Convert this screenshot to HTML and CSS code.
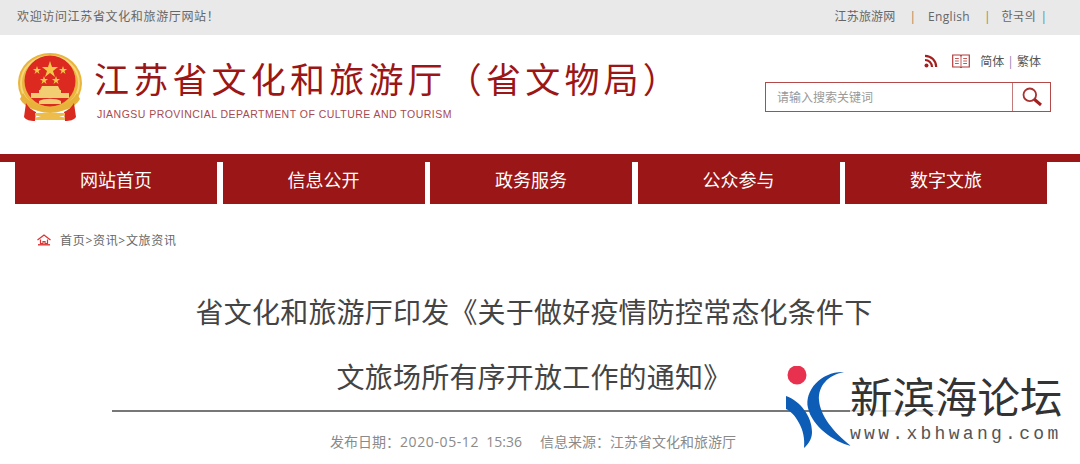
FILE: index.html
```html
<!DOCTYPE html>
<html lang="zh-CN">
<head>
<meta charset="utf-8">
<title>江苏省文化和旅游厅（省文物局）</title>
<link rel="stylesheet" href="styles.css">
</head>
<body>
<div class="topbar">
  <span class="welcome">欢迎访问江苏省文化和旅游厅网站！</span>
  <div class="toplinks">
    <a>江苏旅游网</a><i class="tsep">|</i><a class="en">English</a><i class="tsep">|</i><a class="ko">한국의</a><i class="tend">|</i>
  </div>
</div>
<header class="header">
  <div class="brand">
    <svg class="emblem" viewBox="0 0 66 70" width="66" height="70">
      <ellipse cx="33" cy="30" rx="32" ry="30" fill="#e9b53c"/>
      <ellipse cx="33" cy="30" rx="29" ry="27" fill="none" stroke="#f6d67a" stroke-width="2"/>
      <circle cx="33" cy="28" r="25.500" fill="#dc2a20"/>
      <polygon points="33,8 35,14 41,14 36,18 38,24 33,20 28,24 30,18 25,14 31,14" fill="#f4c64a"/>
      <polygon points="20,13 21,16 24,16 21.500,18 22.500,21 20,19 17.500,21 18.500,18 16,16 19,16" fill="#f4c64a"/>
      <polygon points="46,13 47,16 50,16 47.500,18 48.500,21 46,19 43.500,21 44.500,18 42,16 45,16" fill="#f4c64a"/>
      <polygon points="27,23 28,26 31,26 28.500,28 29.500,31 27,29 24.500,31 25.500,28 23,26 26,26" fill="#f4c64a"/>
      <polygon points="39,23 40,26 43,26 40.500,28 41.500,31 39,29 36.500,31 37.500,28 35,26 38,26" fill="#f4c64a"/>
      <path d="M25 33h16l2 4H23zM22 37h22v3H22zM14 40h38v5H14z" fill="#f2cd72"/>
      <path d="M6 40c6 10 16 14 27 14s21-4 27-14l3 6c-5 9-17 13-30 13S8 55 3 46z" fill="#e8b23a"/>
      <path d="M9 50c3 5 6 7 10 9l-1 9c-5 0-9-1-11-4zM57 50c-3 5-6 7-10 9l1 9c5 0 9-1 11-4z" fill="#d92a1f"/>
      <path d="M18 60h30v2.500l-6 1 6 1V67H18v-2.500l6-1-6-1z" fill="#eebc4a"/>
      <path d="M22 48c5-3 17-3 22 0v3H22z" fill="#f2cd72"/>
    </svg>
    <div class="brand-text">
      <h1 class="site-title">江苏省文化和旅游厅（省文物局）</h1>
      <p class="site-en">JIANGSU PROVINCIAL DEPARTMENT OF CULTURE AND TOURISM</p>
    </div>
  </div>
  <div class="tools">
    <div class="tool-row">
      <svg class="ico-rss" viewBox="0 0 14 14" width="14" height="14">
        <circle cx="2.500" cy="11.500" r="2" fill="#a32020"/>
        <path d="M1 6a7 7 0 0 1 7 7M1 1.800A11.200 11.200 0 0 1 12.200 13" fill="none" stroke="#a32020" stroke-width="2.200"/>
      </svg>
      <svg class="ico-book" viewBox="0 0 18 14" width="18" height="14">
        <path d="M.7 1h7.600l.7 1 .7-1h7.600v12H10l-1 .6-1-.6H.7z" fill="none" stroke="#b23a3a" stroke-width="1.200"/>
        <path d="M9 2v11M3 4.500h3.800M3 7h3.800M3 9.500h3.800M11.200 4.500H15M11.200 7H15M11.200 9.500H15" stroke="#c25a5a" stroke-width="1"/>
      </svg>
      <span class="lang">简体 <b>|</b> 繁体</span>
    </div>
    <div class="search">
      <span class="search-input">请输入搜索关键词</span>
      <span class="search-btn">
        <svg viewBox="0 0 22 22" width="22" height="22">
          <circle cx="8.800" cy="8.800" r="6.300" fill="none" stroke="#a83232" stroke-width="1.800"/>
          <path d="M13.500 13.500L20 19" stroke="#a32020" stroke-width="3"/>
        </svg>
      </span>
    </div>
  </div>
</header>
<nav class="nav">
  <a>网站首页</a><a>信息公开</a><a>政务服务</a><a>公众参与</a><a>数字文旅</a>
</nav>
<div class="crumbs">
  <svg class="ico-home" viewBox="0 0 14 12" width="14" height="12">
    <path d="M.5 6L7 1l6.500 5" fill="none" stroke="#d33" stroke-width="1.300"/>
    <path d="M3.500 5.500v4h2.500V7.500h2V9.500h2.500v-4" fill="none" stroke="#d33" stroke-width="1.200"/>
    <path d="M1 10.800h12" stroke="#d33" stroke-width="1.400"/>
  </svg>
  <span>首页&gt;资讯&gt;文旅资讯</span>
</div>
<main class="article">
  <h2 class="art-title">省文化和旅游厅印发《关于做好疫情防控常态化条件下<br>文旅场所有序开放工作的通知》</h2>
  <div class="art-rule"></div>
  <p class="art-meta"><span>发布日期：<span class="num">2020-05-12</span>&nbsp;&nbsp;15:36</span><span>信息来源：江苏省文化和旅游厅</span></p>
</main>
<div class="watermark">
  <svg class="wm-logo" viewBox="0 0 66 82" width="66" height="82">
    <circle cx="11" cy="9" r="9.500" fill="#e8304f"/>
    <path d="M0 30c14 5 26 20 26 36 0 5-2 11-8 16 1-9-1-18-5-25C9 49 4 45 0 43z" fill="#0d5cb6"/>
    <path d="M58 6C42 9 32 20 33 34c1 15 14 32 32 46C48 76 26 60 22 42 18 24 36 5 58 6z" fill="#0d5cb6"/>
  </svg>
  <div class="wm-text">
    <div class="wm-name">新滨海论坛</div>
    <div class="wm-url">www.xbhwang.com</div>
  </div>
</div>
</body>
</html>
```
FILE: styles.css
```css
* { box-sizing: border-box; }
html, body { margin: 0; padding: 0; }
body {
  position: relative;
  width: 1080px;
  height: 464px;
  overflow: hidden;
  background: #fff;
  font-family: "Open Sans", "Noto Sans CJK SC", sans-serif;
  color: #555;
}
.topbar {
  height: 35px;
  background: #e9e9e9;
  display: flex;
  justify-content: space-between;
  align-items: center;
  padding: 0 33px 3px 17px;
  font-size: 12px;
  color: #666;
}
.welcome { letter-spacing: .65px; }
.toplinks { display: flex; align-items: center; }
.toplinks a:first-child { letter-spacing: .2px; }
.toplinks .en { letter-spacing: .3px; margin-left: -2px; }
.toplinks .ko { letter-spacing: .6px; margin-left: -3px; }
.tsep { font-style: normal; color: #a8814f; margin: 0 14px; }
.tend { font-style: normal; color: #5d87a8; margin-left: 4px; }
.header {
  height: 119px;
  display: flex;
  justify-content: space-between;
  padding: 18px 29px 0 17px;
}
.brand { display: flex; align-items: flex-start; gap: 11px; }
.brand-text { padding-top: 0; }
.site-title {
  margin: 0;
  font-family: "Noto Sans CJK SC", sans-serif;
  font-size: 35px;
  font-weight: 400;
  line-height: 49px;
  letter-spacing: 4.200px;
  color: #9b1616;
  white-space: nowrap;
}
.site-en {
  margin: 5px 0 0 3px;
  font-family: "Liberation Sans", sans-serif;
  font-size: 10.500px;
  line-height: 14px;
  letter-spacing: .47px;
  color: #a84a4f;
}
.tools { width: 286px; display: flex; flex-direction: column; align-items: flex-end; }
.tool-row { display: flex; align-items: center; height: 18px; margin-right: 10px; margin-top: -1px; }
.ico-rss { margin-right: 14px; }
.ico-book { margin-right: 10px; }
.lang { font-size: 12px; color: #555; }
.lang b { font-weight: 400; color: #8c7fb0; }
.search {
  margin-top: 12px;
  width: 286px;
  height: 30px;
  border: 1px solid #b34a4a;
  display: flex;
  align-items: stretch;
}
.search-input { flex: 1; padding-left: 11px; font-size: 12px; line-height: 29px; color: #999; }
.search-btn {
  width: 38px;
  border-left: 1px solid #c47a7a;
  display: flex;
  align-items: center;
  justify-content: center;
}
.nav {
  height: 50px;
  border-top: 8px solid #9b1616;
  padding-left: 15px;
  display: flex;
  gap: 5.500px;
}
.nav a {
  width: 202px;
  height: 42px;
  background: #9b1616;
  color: #fff;
  font-size: 18px;
  line-height: 36px;
  text-align: center;
}
.crumbs {
  display: flex;
  align-items: center;
  gap: 9px;
  height: 20px;
  margin-top: 26px;
  padding-left: 37px;
  font-size: 12px;
  letter-spacing: .7px;
  color: #666;
}
.article { margin-top: 30px; }
.art-title {
  margin: 0 0 0 112px;
  width: 844px;
  height: 130px;
  font-size: 28px;
  font-weight: 400;
  line-height: 65px;
  letter-spacing: .2px;
  text-align: center;
  color: #444;
  white-space: nowrap;
}
.art-rule {
  margin-left: 112px;
  width: 826px;
  height: 2px;
  background: #777;
}
.art-meta {
  margin: 21px 0 0;
  padding-left: 330px;
  display: flex;
  gap: 18px;
  font-size: 14px;
  line-height: 18px;
  color: #8a8a8a;
}
.num { letter-spacing: .6px; }
.watermark {
  position: absolute;
  left: 786px;
  top: 366px;
  width: 294px;
  height: 88px;
  display: flex;
  gap: 1px;
}
.wm-logo { flex: none; }
.wm-text { padding-top: 2px; margin-left: -3px; background: rgba(255, 255, 255, .75); }
.wm-name {
  font-family: "Noto Sans CJK SC", sans-serif;
  font-size: 42.500px;
  line-height: 54px;
  color: #333;
  white-space: nowrap;
}
.wm-url {
  font-family: "Liberation Mono", monospace;
  font-size: 18px;
  line-height: 20px;
  margin-top: 2px;
  letter-spacing: 3.300px;
  color: #555;
  white-space: nowrap;
}
```
